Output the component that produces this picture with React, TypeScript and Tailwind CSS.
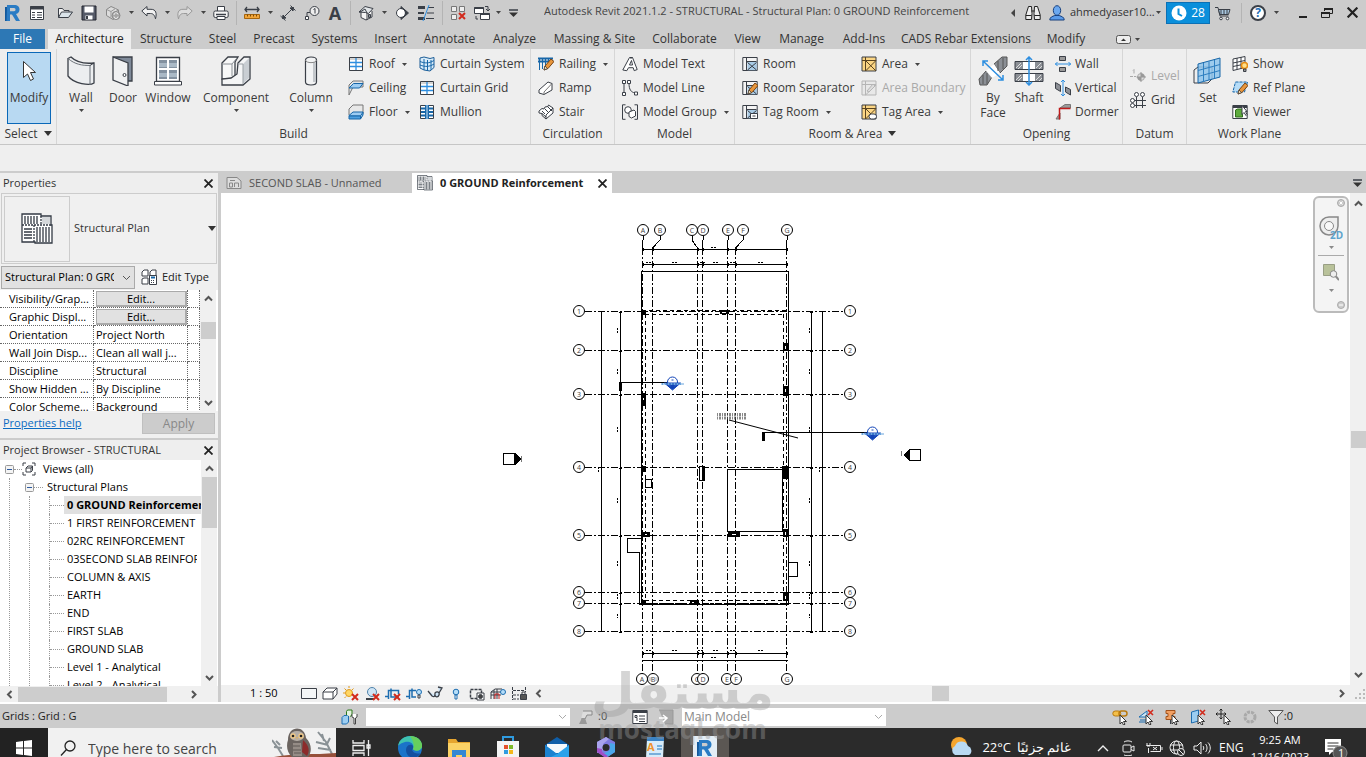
import type { ReactNode } from 'react';

interface GlyphProps {
  w?: number;
  h?: number;
  children: ReactNode;
}

function Glyph({ w = 16, h = 16, children }: GlyphProps) {
  return (
    <svg className="shrink-0" width={w} height={h} viewBox={`0 0 ${w} ${h}`} fill="none" stroke="#3a3f47" aria-hidden="true">
      {children}
    </svg>
  );
}

function Caret({ big = false }: { big?: boolean }) {
  return big ? (
    <Glyph w={8} h={5}><path d="M0 0h8L4 5z" fill="#333" stroke="none" /></Glyph>
  ) : (
    <Glyph w={5} h={3}><path d="M0 0h5L2.500 3z" fill="#444" stroke="none" /></Glyph>
  );
}

function Chevron({ dir, color = '#555', thin }: { dir: 'up' | 'down' | 'left' | 'right'; color?: string; thin?: boolean }) {
  const paths = {
    up: 'M1 6.500L4.500 3l3.500 3.500',
    down: 'M1 3l3.500 3.500L8 3',
    left: 'M6.500 1L3 4.500 6.500 8',
    right: 'M3 1l3.500 3.500L3 8',
  };
  return <Glyph w={9} h={9}><path d={paths[dir]} stroke={color} strokeWidth={thin ? 1 : 2} /></Glyph>;
}

function CloseX({ size = 9 }: { size?: number }) {
  return (
    <svg width={size} height={size} viewBox="0 0 9 9" stroke="#222" strokeWidth="1.8" aria-hidden="true">
      <path d="M.5.5l8 8M8.500.5l-8 8" />
    </svg>
  );
}

const cursor = <path d="M8 6v9l2-2 1.500 3 1.500-.8-1.500-2.700h3z" fill="#fff" stroke="#333" />;
const redX = <path d="M9 8l6 6M15 8l-6 6" stroke="#d22a1c" strokeWidth="2" />;
const pencil = (
  <g>
    <path d="M6 14l1-4 6-7 3 2.500-6 7z" fill="#e8963c" stroke="#7a4412" />
    <path d="M6 14l1-4 2.500 2.500z" fill="#fbe3bd" stroke="#333" strokeWidth=".7" />
  </g>
);

/* ---------- quick access icons ---------- */

const qat: Record<string, ReactNode> = {
  home: (
    <Glyph w={18} h={18}>
      <path d="M1 3h4v14H1z" fill="#12589b" stroke="none" />
      <path d="M3 1h7c4 0 5.500 2 5.500 4.500S14 9.500 12 10l4 7h-4l-4-6.500H6V17H2.500z" fill="#2b7cc4" stroke="none" />
      <path d="M6 4h4c2 0 2 3.200 0 3.200H6z" fill="#ccc" stroke="none" />
    </Glyph>
  ),
  props: (
    <Glyph>
      <path d="M1.500 1.500h13v13h-13z" fill="#fff" />
      <path d="M1 3h14" strokeWidth="3" />
      <path d="M3 7.500h3M3 10h3M3 12.500h3M8 7.500h5M8 10h5M8 12.500h5" />
    </Glyph>
  ),
  open: (
    <Glyph>
      <path d="M1.500 12.500v-9h4l1.500 2h5v2" fill="#f4f4f4" />
      <path d="M1.500 12.500l3-5.500h11l-4 5.500z" fill="#dbe4ea" />
    </Glyph>
  ),
  save: (
    <Glyph>
      <path d="M1 1h14v14H1z" fill="#555a68" stroke="#22252e" />
      <path d="M3.500 1.500h9v6h-9zM4.500 10.500h7v4h-7z" fill="#fff" stroke="none" />
      <path d="M6 11v3" strokeWidth="2" />
    </Glyph>
  ),
  sync: (
    <Glyph>
      <path d="M1.500 4.500L6 1.500l4.500 2 3 1.500v6L8 14.500l-6.500-4z" fill="#dcdcdc" stroke="#888" />
      <path d="M1.500 4.500l4.500 2 4.500-3M6 6.500v6M8 8l5.500-3" stroke="#999" />
      <circle cx="11" cy="10.500" r="4" fill="#a5a5a5" stroke="#8a8a8a" />
      <path d="M9 10a2 2 0 014-.5M13 11.500a2 2 0 01-4 0" stroke="#eee" />
    </Glyph>
  ),
  undo: <Glyph><path d="M.8 6L6 1.500v2.800h4c5 0 6 4 4.500 9.500-1-4-2.500-5.300-5-5.300H6V11z" fill="#f2f2f2" /></Glyph>,
  redo: <Glyph><path d="M15.200 6L10 1.500v2.800H6c-5 0-6 4-4.500 9.500 1-4 2.500-5.300 5-5.300H10V11z" fill="#ddd" stroke="#999" /></Glyph>,
  print: (
    <Glyph>
      <path d="M4.500 6V1.500h7V6" fill="#fff" />
      <rect x=".8" y="6" width="14.400" height="6.500" rx="1.500" fill="#f4f4f4" />
      <path d="M3 9.500h10" strokeWidth="1.500" />
      <path d="M4 11.500h8v3H4z" fill="#fff" />
    </Glyph>
  ),
  measure: (
    <Glyph>
      <path d="M1 4.500h14M3 2L1 4.500 3 7M13 2l2 2.500L13 7" strokeWidth="1.300" />
      <path d="M.5 9.500h15v4H.5z" fill="#f2a63a" stroke="#a5650e" />
      <path d="M3.500 9.500v2M6.500 9.500v2M9.500 9.500v2M12.500 9.500v2" stroke="#7c4a06" />
    </Glyph>
  ),
  dim: <Glyph><path d="M2.500 13.500l11-11M.5 11l5 4.500M10.500.5l5 5" /><path d="M2.500 13.500l.5-3.500 3 3zM13.500 2.500L10 3l3 3z" fill="#3a3f47" /></Glyph>,
  tag: (
    <Glyph>
      <circle cx="10.500" cy="6" r="4.500" fill="#eee" />
      <path d="M9.500 4.500l1.500-1v5M6 7.500H3v5" />
      <path d="M1.500 11.500h3v3h-3z" fill="#fff" />
    </Glyph>
  ),
  text: <span className="text-[18px] leading-none font-bold text-[#3a3f47]">A</span>,
  view3d: (
    <Glyph>
      <path d="M3 6.500v6l5 2.500 6-3V6" fill="#f4f4f4" />
      <path d="M1 7l6-5.500 8 2-4.500 5-3-1z" fill="#e2e6e9" />
      <path d="M1 7l2-.5 4-2.500 2 4v7" />
      <path d="M10.500 9.500h2v3h-2z" fill="#8b9299" />
    </Glyph>
  ),
  section: <Glyph><circle cx="7" cy="8" r="4.500" fill="#fff" /><path d="M7 1.500L14.500 8 7 14.500v-2a4.500 4.500 0 000-9z" fill="#3a3f47" /></Glyph>,
  thin: (
    <Glyph>
      <path d="M0 2.500h7M0 13.500h7" strokeWidth="3" />
      <path d="M0 8h6" strokeWidth="2" />
      <path d="M10 2.500h6M9 8h7M8 13.500h8" />
      <path d="M11 0L5 16" stroke="#2d8ee0" />
    </Glyph>
  ),
  hidden: (
    <Glyph>
      <path d="M1.500 1.500h5v5h-5zM9.500 1.500h5v5h-5zM1.500 9.500h5v5h-5z" fill="#eee" stroke="#777" />
      {redX}
    </Glyph>
  ),
  switch: (
    <Glyph>
      <path d="M.5 2.500h9v6h-9zM6.500 8.500h9v6h-9z" fill="#fff" />
      <path d="M.5 3h9M6.500 9h9" strokeWidth="2" />
      <path d="M11 1.500h3v4M12 4l2 2 2-2M2 11v3h2" />
    </Glyph>
  ),
  more: <Glyph w={9} h={8}><path d="M0 1h9" strokeWidth="1.500" /><path d="M0 3.500h9L4.500 8z" fill="#333" stroke="none" /></Glyph>,
};

const quickAccess: { id: string; label: string; cell: string }[] = [
  { id: 'home', label: 'Revit menu', cell: 'w-[25px]' },
  { id: 'props', label: 'Home', cell: 'w-[23px] mr-[5px]' },
  { id: 'open', label: 'Open', cell: 'w-6' },
  { id: 'save', label: 'Save', cell: 'w-6' },
  { id: 'sync', label: 'Synchronize', cell: 'w-6' },
  { id: 'caret', label: 'Synchronize options', cell: 'w-3' },
  { id: 'undo', label: 'Undo', cell: 'w-6' },
  { id: 'caret', label: 'Undo list', cell: 'w-3' },
  { id: 'redo', label: 'Redo', cell: 'w-6' },
  { id: 'caret', label: 'Redo list', cell: 'w-3' },
  { id: 'print', label: 'Print', cell: 'w-6' },
  { id: 'sep', label: '', cell: 'w-[7px]' },
  { id: 'measure', label: 'Measure', cell: 'w-6' },
  { id: 'caret', label: 'Measure options', cell: 'w-3' },
  { id: 'dim', label: 'Aligned dimension', cell: 'w-6' },
  { id: 'tag', label: 'Tag by category', cell: 'w-6' },
  { id: 'text', label: 'Text', cell: 'w-[22px]' },
  { id: 'sep', label: '', cell: 'w-2' },
  { id: 'view3d', label: 'Default 3D view', cell: 'w-6' },
  { id: 'caret', label: '3D view options', cell: 'w-3' },
  { id: 'section', label: 'Section', cell: 'w-6' },
  { id: 'thin', label: 'Thin lines', cell: 'w-6' },
  { id: 'sep', label: '', cell: 'w-2' },
  { id: 'hidden', label: 'Close inactive views', cell: 'w-6' },
  { id: 'switch', label: 'Switch windows', cell: 'w-6' },
  { id: 'caret', label: 'Window list', cell: 'w-2' },
  { id: 'more', label: 'Customize toolbar', cell: 'w-[22px]' },
];

function TitleBar() {
  return (
    <div className="flex h-[25px] shrink-0 items-center">
      {quickAccess.map((item, i) =>
        item.id === 'sep' ? (
          <span key={i} className={`${item.cell} flex h-6 shrink-0 justify-center`}>
            <span className="w-px bg-[#b4b4b4]" />
          </span>
        ) : (
          <button key={i} aria-label={item.label} className={`${item.cell} flex h-6 shrink-0 items-center justify-center`}>
            {item.id === 'caret' ? <Caret /> : qat[item.id]}
          </button>
        )
      )}
      <h1 className="ml-5 flex-1 truncate pb-1 text-[11px] leading-4 text-[#444]">
        Autodesk Revit 2021.1.2 - STRUCTURAL - Structural Plan: 0 GROUND Reinforcement
      </h1>
      <button aria-label="Collapse search" className="flex w-4 justify-center">
        <Glyph w={4} h={8}><path d="M4 0v8L0 4z" fill="#444" stroke="none" /></Glyph>
      </button>
      <button aria-label="Search" className="flex w-6 justify-center">
        <Glyph>
          <path d="M3.500 1.500h3l.5 7-.5 6H.8V10zM12.500 1.500h-3l-.5 7 .5 6h5.700V10z" fill="#eee" stroke="#222" />
          <path d="M6.500 6h3M1 10.500h5.500M9.500 10.500H15" stroke="#222" />
        </Glyph>
      </button>
      <button aria-label="Account" className="flex w-6 justify-center">
        <Glyph>
          <path d="M.8 15c0-3 2.500-3.500 5-4.500h4.400c2.500 1 5 1.500 5 4.500z" fill="#5b9bea" stroke="#173f7c" />
          <ellipse cx="8" cy="5.500" rx="3.700" ry="4.800" fill="#6ba8f0" stroke="#173f7c" />
        </Glyph>
      </button>
      <button className="flex h-6 w-[97px] items-center gap-px pl-px text-[11px] text-[#333]">
        ahmedyaser10...<Caret />
      </button>
      <button className="flex h-[22px] w-11 items-center justify-center gap-1 border border-[#0b70b5] bg-[#0a8fdb] text-[12px] text-white">
        <Glyph>
          <circle cx="8" cy="8" r="7.500" fill="#fff" stroke="none" />
          <path d="M7.500 3.500V9l3.500 2" stroke="#0a8fdb" strokeWidth="2" />
        </Glyph>
        28
      </button>
      <button aria-label="App store" className="flex w-[26px] justify-center">
        <Glyph>
          <path d="M0 2.500h3l2 8.500h8.500" />
          <path d="M3.500 4.500H15l-1.500 5H4.800z" fill="#a9c8e0" />
          <path d="M6 5v4M9 5v4M12 5v4" />
          <circle cx="6" cy="13.500" r="1.300" fill="#fff" /><circle cx="12.500" cy="13.500" r="1.300" fill="#fff" />
        </Glyph>
      </button>
      <span className="ml-[5px] h-5 w-px bg-[#b4b4b4]" />
      <button aria-label="Help" className="flex w-8 items-center justify-center">
        <span className="flex size-4 items-center justify-center rounded-full border-2 border-[#3a3f47] bg-white text-[12px] font-bold text-[#1f6fb8]">?</span>
      </button>
      <button aria-label="Help menu" className="flex w-1 justify-center"><Caret /></button>
      <button aria-label="Minimize" className="ml-[13px] flex w-6 justify-center"><Glyph w={8} h={10}><path d="M0 9h8" stroke="#222" strokeWidth="2" /></Glyph></button>
      <button aria-label="Restore" className="flex w-6 justify-center">
        <Glyph w={12} h={12}>
          <path d="M3.500 4V1.500h8v5H9M.5 5.500h8v5h-8z" stroke="#222" />
          <path d="M3 2h9M0 6h9" stroke="#222" strokeWidth="2" />
        </Glyph>
      </button>
      <button aria-label="Close" className="flex w-[27px] justify-center"><CloseX size={11} /></button>
    </div>
  );
}

/* ---------- ribbon ---------- */

const ribbonTabs: [string, string][] = [
  ['Structure', 'w-[68px]'], ['Steel', 'w-[45px]'], ['Precast', 'w-[58px]'], ['Systems', 'w-[63px]'],
  ['Insert', 'w-[49px]'], ['Annotate', 'w-[69px]'], ['Analyze', 'w-[61px]'], ['Massing & Site', 'w-[99px]'],
  ['Collaborate', 'w-[81px]'], ['View', 'w-[45px]'], ['Manage', 'w-[63px]'], ['Add-Ins', 'w-[62px]'],
  ['CADS Rebar Extensions', 'w-[142px]'], ['Modify', 'w-[58px]'],
];

function RibbonTabs() {
  return (
    <nav className="flex h-6 shrink-0 items-stretch pt-1 text-[12px] whitespace-nowrap text-[#333]">
      <button className="w-[45px] bg-[#2d78b5] text-white">File</button>
      <button className="ml-[3px] w-[83px] bg-[#eee] text-[#222]">Architecture</button>
      <span className="w-px" />
      {ribbonTabs.map(([label, width]) => (
        <button key={label} className={`${width} flex shrink-0 items-center justify-center`}>{label}</button>
      ))}
      <button aria-label="Minimize ribbon" className="ml-[21px] flex items-center gap-1">
        <Glyph w={15} h={9}>
          <rect x=".5" y=".5" width="14" height="8" rx="2" fill="#eee" stroke="#555" />
          <path d="M5 6h5L7.500 3.500z" fill="#333" stroke="none" />
        </Glyph>
        <Caret />
      </button>
    </nav>
  );
}

const gridPanel = (
  <>
    <path d="M1.500 1.500h13v13h-13z" fill="#fff" />
    <path d="M2 3h12" stroke="#d5d5d5" strokeWidth="2" />
    <path d="M8 2v12M2 6.500h12M2 10.500h12" stroke="#2d8ee0" strokeWidth="1.300" />
  </>
);
const roomBase = (
  <>
    <path d="M.8 1.500h14.400v13H.8z" fill="#f4f4f4" />
    <path d="M4.500 1.500v13M4.500 5.500h10" />
    <path d="M5.500 6h9.200v8.200H5.500z" fill="#a9cbe6" stroke="none" />
    <path d="M5.500 6.500l9 7.500M14.500 6.500l-9 7.500" />
  </>
);
const areaBase = (
  <>
    <path d="M1 1h14v14H1z" fill="#fbd583" />
    <path d="M1 4.500h14M4.500 1v14M4.500 4.500L15 15M15 4.500L4.500 15" stroke="#5a4420" />
  </>
);
const tagBox = <path d="M8.500 9.500h7v5h-7zM10.500 12h3" fill="#fff" />;

const small: Record<string, ReactNode> = {
  Roof: <Glyph>{gridPanel}</Glyph>,
  Ceiling: (
    <Glyph>
      <path d="M1 15V5l4-4h10v6H5l-4 8z" fill="#e4e6e8" stroke="#777" />
      <path d="M1 8l4.500-4.500H15L11.500 8z" fill="#9ecdf3" stroke="#1766a8" />
    </Glyph>
  ),
  Floor: (
    <Glyph>
      <path d="M1 11V5l4-4h10v9" fill="#e8e8e8" stroke="#777" />
      <path d="M1 11.500L5 8h10l-2.500 4H1z" fill="#9ecdf3" stroke="#1766a8" />
      <path d="M1 12h11.500v3H1zM12.500 15L15 11V8" fill="#4ea0e0" stroke="#1766a8" />
    </Glyph>
  ),
  'Curtain System': (
    <Glyph>
      <path d="M1 2l4-1 6 1.500 4-1v10l-4 3.500-6-1-4-2z" fill="#d8ecfa" stroke="#1d5d97" />
      <path d="M1 5.500c5 2 9 2 14-1M1 9c5 2 9 2 14-1M5 3v11M8.500 4v11M12 4v10" stroke="#1766a8" />
    </Glyph>
  ),
  'Curtain Grid': <Glyph>{gridPanel}</Glyph>,
  Mullion: (
    <Glyph>
      <path d="M1.500 1.500h13v13h-13z" fill="#fff" />
      <path d="M8 1v14" stroke="#1766a8" strokeWidth="4" /><path d="M8 1v14" stroke="#cfe6f8" />
      <path d="M2 4.500h4M10 4.500h4M2 8h4M10 8h4M2 11.500h4M10 11.500h4" stroke="#1766a8" strokeWidth="2" />
    </Glyph>
  ),
  Railing: (
    <Glyph>
      <path d="M0 2.500h15M0 5.500h15" stroke="#1766a8" strokeWidth="2" />
      <path d="M1.500 3v11M4.500 3v10M7.500 3v10M10.500 3v6M13.500 3v4" stroke="#1766a8" />
      {pencil}
    </Glyph>
  ),
  Ramp: <Glyph><path d="M1 10L10 2l4 1.500V10l-8 4.500-5-1.500z" fill="#fff" /><path d="M14 3.500L6 12v2.500" stroke="#777" /></Glyph>,
  Stair: (
    <Glyph>
      <path d="M1 7l3-2.500 2 .5 1-2 3-.5.500-1.500L15 4v5l-7 6-4-3.500v-2L1 9z" fill="#fff" />
      <path d="M4 7l3 3M7 5l4 4M10 3l4 4M4 9.500L8 13M8 15v-4l7-7" />
    </Glyph>
  ),
  'Model Text': <Glyph><path d="M.8 14L7.500 1.500h3l4.700 12-3 1.200-1-3H6.500l-1.700 3z" fill="#fff" /><path d="M7.500 9l2-4.500 1 4.500zM10.500 1.500l-2 1" /></Glyph>,
  'Model Line': (
    <Glyph>
      <path d="M2 3v10M7 3c0 7 2 9 6 10" />
      <path d="M.5.5h3v3h-3zM.5 12.500h3v3h-3zM5.500.5h3v3h-3zM12.500 12h3v3h-3z" fill="#fff" />
    </Glyph>
  ),
  'Model Group': (
    <Glyph>
      <path d="M3.500.8h-3v14.500h3M12.500.8h3v14.500h-3" />
      <circle cx="6" cy="6" r="3.300" fill="#fff" />
      <path d="M7 8l5-2 1.500 1.500V12l-4 2L7 12.500z" fill="#fff" />
    </Glyph>
  ),
  Room: <Glyph>{roomBase}</Glyph>,
  'Room Separator': <Glyph>{roomBase}{pencil}</Glyph>,
  'Tag Room': <Glyph>{roomBase}{tagBox}</Glyph>,
  Area: <Glyph>{areaBase}</Glyph>,
  'Area Boundary': (
    <Glyph>
      <path d="M1 1h14v14H1zM1 4.500h14M4.500 1v14M4.500 15L15 5" stroke="#b5b5b5" fill="#e8e8e8" />
      <path d="M6 11l6-7 2 2-6 6z" fill="#ddd" stroke="#b5b5b5" />
    </Glyph>
  ),
  'Tag Area': <Glyph>{areaBase}<rect x="8" y="10" width="7.500" height="5" rx="2.500" fill="#fff" /></Glyph>,
  Wall: (
    <Glyph>
      <path d="M4.500.5h6v4h-6zM4.500 11.500h6v4h-6z" fill="#999" />
      <path d="M0 8h16M2.500 6L.5 8l2 2M13.500 6l2 2-2 2" stroke="#2d8ee0" />
    </Glyph>
  ),
  Vertical: (
    <Glyph>
      <path d="M.5 2.500l5 3v6l-5-3zM10.500 7l5 2.500V15l-5-3z" fill="#8d9096" />
      <path d="M8 0v16M6 2l2-2 2 2M6 14l2 2 2-2" stroke="#2d8ee0" />
    </Glyph>
  ),
  Dormer: (
    <Glyph>
      <path d="M1 15L5 9v6zM5 4l5-3.500h5.500V4z" fill="#9a9a9a" stroke="#777" />
      <path d="M4.500 15.500V4.500h11" stroke="#c01a1a" strokeWidth="1.500" />
    </Glyph>
  ),
  Level: (
    <Glyph>
      <path d="M0 8.500h6" strokeDasharray="3 1" stroke="#aaa" /><path d="M3 2.500l1-1v4" stroke="#aaa" />
      <circle cx="11" cy="9" r="3.500" fill="#ddd" stroke="#aaa" />
      <path d="M11 9V5.500A3.500 3.500 0 0114.500 9zM11 9v3.500A3.500 3.500 0 017.500 9z" fill="#999" stroke="none" />
      <path d="M11 4v10M6.500 9H16" stroke="#999" />
    </Glyph>
  ),
  Grid: (
    <Glyph>
      <path d="M6.500 5v11M12.500 5v11M4 8.500h12M4 13.500h12" />
      <circle cx="6.500" cy="2.500" r="2" fill="#fff" /><circle cx="12.500" cy="2.500" r="2" fill="#fff" />
      <circle cx="2.500" cy="8.500" r="2" fill="#fff" /><circle cx="2.500" cy="13.500" r="2" fill="#fff" />
    </Glyph>
  ),
  Show: (
    <Glyph>
      <path d="M1 3l12-2.500v11L1 14.500zM1 7l12-2.500M1 10.500l12-2.500M5 2v11.500M9 1v12" fill="#fff" />
      <circle cx="12.500" cy="9.500" r="3" fill="#ffe08a" stroke="#e58a12" strokeWidth="1.500" />
      <path d="M11.500 13h2.500v2.500h-2.500z" fill="#999" />
    </Glyph>
  ),
  'Ref Plane': <Glyph><path d="M3.500 2h12l-3 10H.8z" fill="#b5dcf8" stroke="#1766a8" strokeDasharray="3 1" />{pencil}</Glyph>,
  Viewer: (
    <Glyph>
      <path d="M.8 1.500h14.400v13H.8z" fill="#fff" /><path d="M1 3h14" strokeWidth="2" />
      <path d="M3.500 6l2-1h5v8H3.500z" fill="#5dab3d" stroke="#2f6d1b" /><path d="M10 1.500v9l2-2 2 3 1-1-1.500-3H15z" fill="#fff" />
    </Glyph>
  ),
};

const hatch = '#8b8f95';
const large: Record<string, ReactNode> = {
  Modify: <Glyph w={30} h={30}><path d="M9.500 5.500v16l4-3.500 3 6.500 3-1.500-3-6.500h5z" fill="#fff" stroke="#333" /></Glyph>,
  Wall: (
    <Glyph w={30} h={30}>
      <path d="M2 2.500l3-1.500c6 6 13 7 23 6v20c-4 3-20 1-26-7z" fill="#eceef0" strokeWidth="1.300" />
      <path d="M2 2.500c7 6 14 7 22 7v19.500" stroke="#6d737a" /><path d="M24 9.500l4-2.500" />
    </Glyph>
  ),
  Door: (
    <Glyph w={30} h={30}>
      <path d="M5 1h19v24H10" fill="#7f8a99" strokeWidth="1.300" />
      <path d="M5 1l15 6v23L5 24z" fill="#f0f1f2" strokeWidth="1.300" /><circle cx="16.500" cy="19" r="1.500" fill="#fff" />
    </Glyph>
  ),
  Window: (
    <Glyph w={30} h={30}>
      <path d="M3.500 1.500h23v24h-23z" fill="#fff" strokeWidth="1.300" />
      <path d="M6 4h8v8H6zM16 4h8v8h-8zM6 14h8v9H6zM16 14h8v9h-8z" fill="#8391a0" stroke="none" />
      <path d="M6 9h8M16 9h8M6 19h8M16 19h8" stroke="#aab9c6" strokeWidth="4" />
      <path d="M1.500 25.500h27v3.500h-27z" fill="#fff" />
    </Glyph>
  ),
  Component: (
    <Glyph w={30} h={30}>
      <path d="M1 7l6-6h10l-3 5v14l-4 3H1z" fill="#f7f8f8" strokeWidth="1.300" />
      <path d="M1 8h10l5-6M11 8v12" stroke="#8a8f95" />
      <path d="M17 7l6-6h6v22l-7 6H1v-6l9-1 6-4z" fill="#f4f5f6" strokeWidth="1.300" />
      <path d="M22 8l6-6v20l-6 6z" fill="#c9ced3" stroke="none" />
      <path d="M17 8h5v20" stroke="#9a9fa5" />
    </Glyph>
  ),
  Column: (
    <Glyph w={30} h={30}>
      <path d="M9.500 4c0-4 11-4 11 0v22c0 4-11 4-11 0z" fill="#f2f3f4" strokeWidth="1.200" />
      <path d="M17 6h3v20h-3z" fill="#c3c7cb" stroke="none" /><path d="M9.500 4c0 3.500 11 3.500 11 0" stroke="#888" />
    </Glyph>
  ),
  'By Face': (
    <Glyph w={30} h={30}>
      <path d="M16 8l8-7h5v9l-7 7zM1 23l7-8 6 6-5 8H2z" fill={hatch} stroke="#555" />
      <path d="M8 15l8-7 6 9-8 5z" fill="#fff" stroke="none" />
      <path d="M20 5v10M25 2v11M5 19v9M9 17v11" stroke="#555" />
      <path d="M5 5l20 19M5 10V5h5M25 19v5h-5" stroke="#2d8ee0" strokeWidth="1.500" />
    </Glyph>
  ),
  Shaft: (
    <Glyph w={30} h={30}>
      <path d="M1 5.500h28v8H1zM1 17.500h28v8H1z" fill={hatch} />
      <path d="M9 6h12v7H9zM9 18h12v7H9z" fill="#fff" stroke="none" />
      <path d="M2 12l5-5M4 13l4-4M22 12l5-5M25 13l3-3M2 24l5-5M4 25l4-4M22 24l5-5M25 25l3-3" stroke="#ddd" />
      <path d="M15 1v28M12 4l3-3 3 3M12 26l3 3 3-3" stroke="#2d8ee0" strokeWidth="1.500" />
    </Glyph>
  ),
  Set: (
    <Glyph w={30} h={30}>
      <path d="M1 14l4-3h14v12l-4 4H1z" fill="#eee" />
      <path d="M5 8l22-6v19L5 27z" fill="#8ec4ec" fillOpacity=".85" stroke="#1766a8" />
      <path d="M10.500 7v19M16 5.500v18.500M21.500 4v18.500M5 14.500l22-6M5 20.500l22-6" stroke="#2f7fc0" />
    </Glyph>
  ),
};

function SmallButton({ label, menu, disabled, tight }: { label: string; menu?: boolean; disabled?: boolean; tight?: boolean }) {
  return (
    <button disabled={disabled} className={`flex h-6 items-center whitespace-nowrap ${tight ? 'gap-1' : 'gap-[5px]'} ${disabled ? 'text-[#a9a9a9]' : ''}`}>
      {small[label]}
      <span>{label}</span>
      {menu && <span className="pl-0.5"><Caret /></span>}
    </button>
  );
}

function LargeButton({ label, cell, menu }: { label: string; cell: string; menu?: boolean }) {
  return (
    <button className={`${cell} flex shrink-0 flex-col items-center pt-1`}>
      {large[label]}
      <span className="mt-1 leading-[15px]">{label}</span>
      {menu && <span className="mt-1"><Caret /></span>}
    </button>
  );
}

function RibbonGroup({ title, width, menu, children }: { title: string; width: string; menu?: boolean; children: ReactNode }) {
  return (
    <section className={`${width} flex shrink-0 flex-col border-r border-[#d6d6d6]`}>
      <div className="flex h-[75px] items-start pt-[3px]">{children}</div>
      <h2 className="flex h-[19px] items-center justify-center gap-1.5 text-[12px]">
        {title}
        {menu && <Caret big />}
      </h2>
    </section>
  );
}

function Ribbon() {
  return (
    <div className="flex h-24 shrink-0 overflow-hidden border-b border-[#c6c6c6] bg-[#eee] text-[12px] text-[#3a3a3a]">
      <RibbonGroup title="Select" width="w-[57px]" menu>
        <button className="ml-[7px] flex h-[72px] w-11 flex-col items-center border border-[#0a68b8] bg-[#b8d9f2] pt-[3px]">
          {large.Modify}
          <span className="mt-1 leading-[15px]">Modify</span>
        </button>
      </RibbonGroup>
      <RibbonGroup title="Build" width="w-[474px]">
        <LargeButton label="Wall" cell="ml-1.5 w-9" menu />
        <LargeButton label="Door" cell="ml-1.5 w-9" />
        <LargeButton label="Window" cell="ml-[3px] w-12" />
        <LargeButton label="Component" cell="ml-[11px] w-[66px]" menu />
        <LargeButton label="Column" cell="ml-5 w-11" menu />
        <div className="ml-[15px] w-[71px]">
          <SmallButton label="Roof" menu />
          <SmallButton label="Ceiling" />
          <SmallButton label="Floor" menu />
        </div>
        <div>
          <SmallButton label="Curtain System" />
          <SmallButton label="Curtain Grid" />
          <SmallButton label="Mullion" />
        </div>
      </RibbonGroup>
      <RibbonGroup title="Circulation" width="w-[84px]">
        <div className="pl-[7px]">
          <SmallButton label="Railing" menu />
          <SmallButton label="Ramp" />
          <SmallButton label="Stair" />
        </div>
      </RibbonGroup>
      <RibbonGroup title="Model" width="w-[120px]">
        <div className="pl-[7px]">
          <SmallButton label="Model Text" />
          <SmallButton label="Model Line" />
          <SmallButton label="Model Group" menu />
        </div>
      </RibbonGroup>
      <RibbonGroup title="Room & Area" width="w-[236px]" menu>
        <div className="w-[126px] pl-[7px]">
          <SmallButton label="Room" />
          <SmallButton label="Room Separator" />
          <SmallButton label="Tag Room" menu />
        </div>
        <div>
          <SmallButton label="Area" menu />
          <SmallButton label="Area Boundary" disabled />
          <SmallButton label="Tag Area" menu />
        </div>
      </RibbonGroup>
      <RibbonGroup title="Opening" width="w-[152px]">
        <LargeButton label="By Face" cell="ml-1 w-9" />
        <LargeButton label="Shaft" cell="w-9" />
        <div className="pl-2">
          <SmallButton label="Wall" tight />
          <SmallButton label="Vertical" tight />
          <SmallButton label="Dormer" tight />
        </div>
      </RibbonGroup>
      <RibbonGroup title="Datum" width="w-16">
        <div className="pt-3 pl-[7px]">
          <SmallButton label="Level" disabled />
          <SmallButton label="Grid" />
        </div>
      </RibbonGroup>
      <section className="flex w-[125px] flex-col">
        <div className="flex h-[75px] items-start pt-[3px]">
          <LargeButton label="Set" cell="ml-[3px] w-9" />
          <div className="pl-1.5">
            <SmallButton label="Show" />
            <SmallButton label="Ref Plane" />
            <SmallButton label="Viewer" />
          </div>
        </div>
        <h2 className="flex h-[19px] items-center justify-center">Work Plane</h2>
      </section>
    </div>
  );
}

/* ---------- left dock ---------- */

function PanelHeader({ title }: { title: string }) {
  return (
    <div className="flex h-5 shrink-0 items-center justify-between bg-[#eee] pr-[5px] pl-[3px] text-[11px] text-[#333]">
      <h2>{title}</h2>
      <button aria-label={`Close ${title}`}><CloseX /></button>
    </div>
  );
}

function StructuralPlanIcon({ size }: { size: number }) {
  return (
    <svg width={size} height={size} viewBox="0 0 32 32" fill="#fff" stroke="#333a44" strokeWidth="1.300" aria-hidden="true">
      <path d="M1 1h19v2h10v9h1v18H14v-1H1z" />
      <path d="M21 4h8v7h-8z" fill="#d5d8db" stroke="none" />
      <path d="M4 3v8M7 3v8M10 3v8M13 3v8M16 3v8M3 16h8M3 19h8M3 22h8M3 25h8M16 14v15M19 14v15M22 14v15M25 14v15M28 14v15" />
      <path d="M1 12h30M13 12v17M20 3v9" strokeDasharray="2 1" />
    </svg>
  );
}

const properties: { name: string; value: string; button?: boolean }[] = [
  { name: 'Visibility/Grap...', value: 'Edit...', button: true },
  { name: 'Graphic Displ...', value: 'Edit...', button: true },
  { name: 'Orientation', value: 'Project North' },
  { name: 'Wall Join Disp...', value: 'Clean all wall j...' },
  { name: 'Discipline', value: 'Structural' },
  { name: 'Show Hidden ...', value: 'By Discipline' },
  { name: 'Color Scheme...', value: 'Background' },
];

function PropertiesPanel() {
  return (
    <section className="shrink-0 bg-[#f0f0f0]">
      <PanelHeader title="Properties" />
      <div className="mr-px ml-px flex h-[71px] items-center border border-[#ccc]">
        <div className="ml-0.5 flex size-[66px] items-center justify-center border border-[#ccc]">
          <StructuralPlanIcon size={32} />
        </div>
        <span className="flex-1 pl-1 text-[11px] text-[#333]">Structural Plan</span>
        <Caret big />
      </div>
      <div className="flex h-[26px] items-center pl-px">
        <div className="relative w-[134px]">
          <select aria-label="Instance filter" className="block h-[23px] w-full appearance-none overflow-hidden border border-[#aaa] bg-[#e1e1e1] pr-5 pl-[3px] text-[11px] text-black">
            <option>Structural Plan: 0 GROUND Reinforcement</option>
          </select>
          <span className="pointer-events-none absolute inset-y-0 right-1 flex items-center"><Chevron dir="down" thin /></span>
        </div>
        <button className="flex items-center gap-[5px] pl-1.5 text-[11px] text-[#222]">
          <Glyph>
            <path d="M1 3l2-2h4v6H1zM9 3l2-2h4v6H9zM1 10l2-1h4v6H1z" fill="#fff" />
            <path d="M8.500 6.500h7v9h-7z" fill="#fff" /><path d="M10 8.500h4" stroke="#1766a8" strokeWidth="2" /><path d="M10 11.500h4M10 13.500h4" strokeDasharray="1 1" />
          </Glyph>
          Edit Type
        </button>
      </div>
      <div className="flex h-[121px] overflow-hidden bg-white">
        <table className="w-[200px] table-fixed border-separate border-spacing-0 self-start text-[11px] leading-[17px] text-black">
          <tbody>
            {properties.map((row) => (
              <tr key={row.name}>
                <th scope="row" className="h-[18px] w-[94px] truncate border-r border-b border-dotted border-[#666] p-0 pl-[9px] text-left font-normal">{row.name}</th>
                <td className="h-[18px] w-[94px] truncate border-r border-b border-dotted border-[#666] p-0 pl-0.5">
                  {row.button ? (
                    <button className="mt-px block h-4 w-[91px] border border-r-2 border-b-2 border-[#aaa] bg-[#e1e1e1] text-center leading-[13px]">{row.value}</button>
                  ) : (
                    row.value
                  )}
                </td>
                <td className="h-[18px] border-r border-b border-dotted border-[#666] p-0" />
              </tr>
            ))}
          </tbody>
        </table>
        <div className="mr-0.5 flex flex-1 flex-col items-center justify-between bg-[#f0f0f0] py-1">
          <Chevron dir="up" />
          <div className="mb-10 h-[17px] w-[15px] bg-[#cdcdcd]" />
          <Chevron dir="down" />
        </div>
      </div>
      <div className="flex h-[27px] items-center justify-between pr-[3px] pb-0.5 pl-[3px]">
        <a href="#help" className="text-[11px] text-[#0b6bc2] underline">Properties help</a>
        <button disabled className="h-[21px] w-[73px] border border-[#bfbfbf] bg-[#ccc] text-[12px] text-[#888]">Apply</button>
      </div>
    </section>
  );
}

const views = [
  '0 GROUND Reinforcement', '1 FIRST REINFORCEMENT', '02RC REINFORCEMENT', '03SECOND SLAB REINFORCEMENT', 'COLUMN & AXIS',
  'EARTH', 'END', 'FIRST SLAB', 'GROUND SLAB', 'Level 1 - Analytical', 'Level 2 - Analytical',
];

function Collapse() {
  return (
    <Glyph w={9} h={9}>
      <rect x=".5" y=".5" width="8" height="8" rx="1" fill="#f4f4f4" stroke="#999" />
      <path d="M2 4.500h5" stroke="#2c5aa0" />
    </Glyph>
  );
}

function ProjectBrowser() {
  return (
    <section className="flex min-h-0 flex-1 flex-col border-t-2 border-[#ccc]">
      <PanelHeader title="Project Browser - STRUCTURAL" />
      <div className="flex min-h-0 flex-1 bg-white">
        <ul className="w-[201px] overflow-hidden text-[11px] leading-[18px] whitespace-nowrap text-black">
          <li>
            <button className="flex h-[18px] items-center pl-[5px]">
              <Collapse />
              <span className="w-2 border-t border-dotted border-[#999]" />
              <Glyph w={14} h={14}>
                <path d="M4 1H1v3M10 1h3v3M4 13H1v-3M10 13h3v-3" />
                <path d="M4 6l2-2h4.500v4.500L9 10H4z" fill="#fff" /><path d="M4 6h5v4M9 6l1.500-2" />
              </Glyph>
              <span className="pl-[7px]">Views (all)</span>
            </button>
            <ul className="ml-[9px] border-l border-dotted border-[#999]">
              <li>
                <button className="flex h-[18px] items-center pl-[15px]">
                  <Collapse />
                  <span className="w-[9px] border-t border-dotted border-[#999]" />
                  <span className="pl-1">Structural Plans</span>
                </button>
                <ul className="ml-[19px] border-l border-dotted border-[#999] pl-[19px]">
                  {views.map((name, i) => (
                    <li key={name} className="flex items-center border-l border-dotted border-[#999]">
                      <span className="w-[14px] shrink-0 border-t border-dotted border-[#999]" />
                      <button className={i === 0 ? 'min-w-0 flex-1 overflow-hidden bg-[#e0e0e0] pl-[3px] text-left font-bold' : 'mr-1 min-w-0 flex-1 overflow-hidden pl-[3px] text-left'}>
                        {name}
                      </button>
                    </li>
                  ))}
                </ul>
              </li>
            </ul>
          </li>
        </ul>
        <div className="mr-px flex flex-1 flex-col items-center bg-[#f0f0f0] py-1">
          <Chevron dir="up" />
          <div className="mt-1 mb-auto h-[51px] w-[15px] bg-[#cdcdcd]" />
          <Chevron dir="down" />
        </div>
      </div>
      <div className="flex h-4 shrink-0 items-center bg-[#f0f0f0] pl-[5px]">
        <Chevron dir="left" />
        <div className="ml-1 h-[15px] w-[149px] bg-[#cdcdcd]" />
        <span className="ml-[22px]"><Chevron dir="right" /></span>
      </div>
    </section>
  );
}

/* ---------- drawing ---------- */

const columnGrids = [
  { id: 'A', top: 643, x: 642.5, bottom: 642 },
  { id: 'B', top: 660, x: 652.5, bottom: 653 },
  { id: 'C', top: 692, x: 697.5, bottom: 697 },
  { id: 'D', top: 703, x: 702.5, bottom: 703 },
  { id: 'E', top: 728, x: 727.5, bottom: 727 },
  { id: 'F', top: 743, x: 735.5, bottom: 736 },
  { id: 'G', top: 787, x: 786.5, bottom: 787 },
];
const rowGrids = [311.5, 350.5, 394.5, 467.5, 535.5, 592.5, 603.5, 631.5];

// x, y, width, height of the concrete columns
const concrete = [
  [642, 310, 4, 5], [720, 310, 9, 4], [783, 343, 5, 8], [783, 386, 5, 10], [642, 393, 4, 13],
  [782, 466, 7, 13], [642, 466, 4, 6], [642, 532, 8, 5], [728, 532, 12, 5],
  [783, 529, 5, 8], [783, 592, 5, 9], [642, 600, 4, 4], [690, 600, 9, 4],
];
// small light cores left inside some of the columns
const cores = [
  [785, 346, 1, 3], [785, 389, 1, 3], [643, 398, 1, 2], [645, 534, 2, 1], [732, 534, 4, 1], [785, 532, 1, 3], [785, 596, 1, 3], [692, 602, 2, 1], [722, 312, 4, 1],
];

function Bubble({ x, y, label }: { x: number; y: number; label: string | number }) {
  return (
    <g>
      <circle cx={x} cy={y} r="5.500" fill="#fff" stroke="#000" />
      <text x={x} y={y + 2.5} textAnchor="middle" fontSize="7" fill="#444" stroke="none">{label}</text>
    </g>
  );
}

function SectionHead({ x, y }: { x: number; y: number }) {
  return (
    <g stroke="#1244b8">
      <path d={`M${x - 8} ${y + 1}h16l-8 7z`} fill="#1244b8" />
      <circle cx={x} cy={y} r="5" fill="#fff" />
      <path d={`M${x - 5} ${y + 1}h10l-5 5z`} fill="#1244b8" />
      <path d={`M${x - 11} ${y + 2}h22`} stroke="#6aa5dd" strokeDasharray="2 1" strokeWidth="2" />
      <path d={`M${x - 1} ${y - 2}h2`} />
    </g>
  );
}

function FloorPlan() {
  return (
    <svg className="h-full w-full" viewBox="221 193 1129 492" preserveAspectRatio="xMidYMid meet" fill="none" stroke="#000" role="img" aria-label="Structural plan of the ground floor">
      <g shapeRendering="crispEdges">
        {/* grid lines */}
        {columnGrids.map((g) => (
          <path key={g.id} d={`M${g.top} 236v4L${g.x} 248`} />
        ))}
        {columnGrids.map((g) => (
          <path key={g.id} d={`M${g.x} 248V674`} strokeDasharray="7 2 2 2" />
        ))}
        {rowGrids.map((y) => (
          <path key={y} d={`M585 ${y}H845`} strokeDasharray="7 2 2 2" />
        ))}
        {/* dimension strings */}
        <path d="M642 249.500h146M642 264.500h146M642 653.500h146M642 660.500h146" />
        <path d="M601.500 311v320M620.500 311v320M811.500 311v320M822.500 311v320" />
        <path d="M711 247.500h6M646 262.500h5M672 262.500h6M700 262.500h5M713 262.500h5M730 262.500h5M758 262.500h6M646 650.500h5M672 650.500h6M698 650.500h5M713 650.500h5M730 650.500h5M758 650.500h6M711 657.500h6" strokeDasharray="2 1" />
        {[617.5, 809.5].map((x) => (
          <path key={x} d={`M${x} 328v6M${x} 369v6M${x} 427v6M${x} 498v6M${x} 561v6M${x} 594v6M${x} 614v4`} strokeDasharray="2 1" />
        ))}
        <path d="M598.500 467v6M819.500 467v6" strokeDasharray="2 1" />
        {rowGrids.map((y) => (
          <path key={y} d={`M619 ${y + 1}h3M810 ${y + 1}h3`} />
        ))}
        {columnGrids.map((g) => (
          <path key={g.id} d={`M${g.x + 1} 248v3M${g.x + 1} 263v3M${g.x + 1} 652v3`} />
        ))}
        {/* slab outline */}
        <path d="M641.500 538V271.500H788.500V604.500H639.500V552.500H627.500V538.500H641.500V604" />
        <path d="M788 562.500h9.500v14H788M645.500 479.500h6v8h-6z" />
        <path d="M727.500 469.500h55v62h-55z" />
        <path d="M642 310.500h145M645 314.500h139M645 600.500h139M640 603.500h148M645.500 314v286M783.500 314v286" strokeDasharray="4 3" />
        {concrete.map(([x, y, w, h]) => (
          <rect key={`${x}-${y}`} x={x} y={y} width={w} height={h} fill="#000" stroke="none" />
        ))}
        {cores.map(([x, y, w, h]) => (
          <rect key={`${x}-${y}`} x={x} y={y} width={w} height={h} fill="#fff" stroke="none" />
        ))}
        <path d="M699.500 466.500h5v14h-5z" fill="#fff" />
        <path d="M703.500 466v15" strokeWidth="3" />
        {/* sections */}
        <path d="M620 382.500h53M763 432.500h110" />
        <path d="M620.500 382v9M763.500 432v9" strokeWidth="3" />
        {/* elevation marks */}
        <path d="M503.500 453.500h11v11h-11z" /><path d="M515 453v12l6-6z" fill="#000" stroke="none" />
        <path d="M909.500 449.500h11v11h-11z" /><path d="M909 449v12l-6-6z" fill="#000" stroke="none" />
        <path d="M521.500 456v6M901.500 451v5" stroke="#777" />
      </g>
      <path d="M729 420l69 18" />
      <SectionHead x={672.5} y={382} />
      <SectionHead x={872.5} y={432} />
      <path d="M717 414.500h29M717 418h29" stroke="#555" strokeWidth="3" strokeDasharray="1 1 2 1" opacity=".7" />
      {columnGrids.map((g) => (
        <g key={g.id}>
          <Bubble x={g.top} y={230} label={g.id} />
          <Bubble x={g.bottom} y={679} label={g.id} />
        </g>
      ))}
      {rowGrids.map((y, i) => (
        <g key={y}>
          <Bubble x={579} y={y - 0.5} label={i + 1} />
          <Bubble x={850} y={y - 0.5} label={i + 1} />
        </g>
      ))}
    </svg>
  );
}

function NavigationBar() {
  return (
    <div className="absolute top-[3px] right-px flex h-[117px] w-9 flex-col items-center rounded-md border-2 border-[#bbb] bg-[#f4f4f4]">
      <button aria-label="Close navigation bar" className="mt-px mr-0.5 self-end">
        <Glyph w={8} h={8}><circle cx="4" cy="4" r="3.500" fill="#ccc" stroke="#aaa" /><path d="M2.500 2.500l3 3M5.500 2.500l-3 3" stroke="#fff" /></Glyph>
      </button>
      <button aria-label="Steering wheel" className="mt-2">
        <Glyph w={24} h={25}>
          <path d="M10 2h9v9a9 9 0 11-9-9z" fill="#eee" stroke="#888" strokeWidth="1.500" />
          <circle cx="10" cy="11" r="4.500" fill="#f8f8f8" stroke="#888" />
          <text x="11" y="24" fontSize="10" fontWeight="bold" fill="#5ea3cc" stroke="none">2D</text>
        </Glyph>
      </button>
      <span className="flex pt-1.5 opacity-60"><Caret /></span>
      <span className="mt-1.5 h-px w-[26px] shrink-0 bg-[#aaa]" />
      <button aria-label="Zoom" className="mt-2">
        <Glyph w={16} h={17}>
          <path d="M.5.5h11v11H.5z" fill="#b9c29a" stroke="#999f85" />
          <circle cx="10.500" cy="10" r="3.300" fill="#eee" stroke="#888" /><path d="M13 12.500l3 3.500" stroke="#888" strokeWidth="2" />
        </Glyph>
      </button>
      <span className="flex pt-2 opacity-60"><Caret /></span>
      <button aria-label="Navigation options" className="mt-auto mr-0.5 mb-0.5 self-end">
        <Glyph w={8} h={8}><circle cx="4" cy="4" r="3.500" fill="#ccc" stroke="#aaa" /><path d="M2 4h4" stroke="#fff" /></Glyph>
      </button>
    </div>
  );
}

const viewControls: [string, ReactNode][] = [
  ['Detail level', <path d="M.5 2.500h15v10H.5z" fill="#f4f6f7" />],
  ['Visual style', <path d="M1 6l4-4h10v6l-4 5H1zM1 6h10v7M11 6l4-4" fill="#fff" />],
  ['Sun path', <><circle cx="6" cy="7" r="3.500" fill="#ffd764" stroke="#e09a1a" /><path d="M6 0v2M0 7h2M1.500 2.500L3 4M10.500 2.500L9 4M1.500 12L3 10.500" stroke="#e09a1a" />{redX}</>],
  ['Shadows', <><circle cx="8" cy="6" r="4.500" fill="#cfe5f6" stroke="#4f83ab" /><path d="M2 13h8" strokeWidth="2" />{redX}</>],
  ['Crop view', <><path d="M0 10.500h4M3.500 13V4.500h10V8M6 2.500V11h8" stroke="#1d6db0" strokeWidth="1.500" />{redX}</>],
  ['Crop region', <><path d="M0 10.500h4M3.500 13V4.500H10M6 2.500V11h4" stroke="#1d6db0" strokeWidth="1.500" /><circle cx="13" cy="6" r="2.500" fill="#b5def9" stroke="#1d6db0" /><path d="M12 9h2v3h-2z" /></>],
  ['Temporary hide', <><path d="M1 5l4 5c3 2 3-1 3-3 2-2 5-1 4 2s-4 2-4 0M12 7l3-5-4-1" fill="#cfe5f6" strokeWidth="1.300" /></>],
  ['Reveal hidden', <><circle cx="8" cy="6" r="2.800" fill="#b5def9" stroke="#1d6db0" /><path d="M7 9h2v4H7z" fill="#fff" stroke="#1d6db0" /></>],
  ['View properties', <><path d="M1.500 3.500h11v9h-11z" strokeWidth="1.500" strokeDasharray="3 1" /><path d="M8 7h7v7H8z" fill="#fff" /><circle cx="11.500" cy="10.500" r="2" fill="#444" /></>],
  ['Analytical model', <><path d="M1 13V6l4-3h7M1 6h10M1 9h10M4 4v9M7 3v10" /><path d="M5 13V8h4v5" stroke="#c22" /><circle cx="13" cy="6" r="2.500" fill="#b5def9" stroke="#1d6db0" /></>],
  ['Constraints', <><path d="M1.500 1v13M14.500 1v5M2 4.500h12M2 9h6M2 13h6" strokeDasharray="3 1" /><path d="M9.500 8.500h6v5h-6z" fill="#555" /><path d="M11 8V6h3v2" /></>],
];

function ViewArea() {
  return (
    <main className="flex min-w-0 flex-1 flex-col">
      <div className="flex h-5 shrink-0 items-stretch pr-1 text-[11px] text-[#555]">
        <button className="flex w-[191px] items-center gap-[7px] pl-[5px]">
          <Glyph>
            <path d="M1 2.500h10l4 3.500v7.500H1z" fill="#ddd" stroke="#888" />
            <path d="M3.500 12V8h3v4zM8.500 12V8h4v4M4 5.500h5" stroke="#888" />
          </Glyph>
          SECOND SLAB - Unnamed
        </button>
        <div className="flex w-[200px] items-center bg-white pl-[5px] font-bold text-[#222]">
          <StructuralPlanIcon size={16} />
          <span className="min-w-0 flex-1 overflow-hidden pl-[7px] whitespace-nowrap">0 GROUND Reinforcement</span>
          <button aria-label="Close view" className="pr-[5px]"><CloseX /></button>
        </div>
        <button aria-label="View list" className="ml-auto">{qat.more}</button>
      </div>
      <div className="flex min-h-0 flex-1 bg-white">
        <div className="relative min-w-0 flex-1 overflow-hidden">
          <FloorPlan />
          <NavigationBar />
        </div>
        <div className="flex w-4 flex-col items-center justify-between bg-[#f0f0f0] py-1.5">
          <Chevron dir="up" />
          <div className="h-[17px] w-[15px] bg-[#cdcdcd]" />
          <Chevron dir="down" />
        </div>
      </div>
      <div className="flex h-[17px] shrink-0 items-center bg-[#f0f0f0] pl-[29px] text-[11px] text-black">
        <button className="w-[51px] text-left">1 : 50</button>
        {viewControls.map(([label, art]) => (
          <button key={label} aria-label={label} className="w-[21px]"><Glyph>{art}</Glyph></button>
        ))}
        <span className="ml-0.5"><Chevron dir="left" /></span>
        <div className="flex flex-1 justify-center"><div className="h-[15px] w-[17px] bg-[#cdcdcd]" /></div>
        <span className="mr-2"><Chevron dir="right" /></span>
        <Glyph w={12} h={12}>
          <path d="M9 2h2M9 6h2M9 10h2M5 6h2M5 10h2M1 10h2" stroke="#bbb" strokeWidth="2" />
        </Glyph>
      </div>
    </main>
  );
}

/* ---------- status bar ---------- */

const selectToggles: [string, ReactNode][] = [
  ['Select links', <><rect x=".8" y="2" width="8" height="5" rx="2.500" fill="#f4c04a" stroke="#b97a10" /><rect x="7" y="2" width="8" height="5" rx="2.500" stroke="#b97a10" strokeWidth="1.500" />{cursor}</>],
  ['Select underlay elements', <><path d="M1 8l8-6v6zM1 13h9M2 11h8" fill="#cfe5f6" stroke="#1d6db0" /><path d="M10 1l5 5M15 1l-5 5" stroke="#d22a1c" strokeWidth="1.600" />{cursor}</>],
  ['Select pinned elements', <><path d="M2 1.500h9v3H9v3h2v3H2v-3h2v-3H2z" fill="#f2a063" stroke="#a3521b" /><path d="M6.500 11v4" />{cursor}</>],
  ['Select elements by face', <><path d="M1.500 3l7-2v11l-7 2z" fill="#9ccdf1" stroke="#1d6db0" /><path d="M10 1l5 5M15 1l-5 5" stroke="#d22a1c" strokeWidth="1.600" />{cursor}</>],
  ['Drag elements on selection', <><path d="M5 0v10M0 5h10M3.500 1.500L5 0l1.500 1.500M3.500 8.500L5 10l1.500-1.500M1.500 3.500L0 5l1.500 1.500M8.500 3.500L10 5 8.500 6.500" stroke="#222" />{cursor}</>],
  ['Background processes', <circle cx="8" cy="8" r="5" stroke="#a9a9a9" strokeWidth="3" strokeDasharray="3 1" />],
];

function StatusSelect({ label, value }: { label: string; value: string }) {
  return (
    <div className="relative w-[204px]">
      <select aria-label={label} className="block h-[18px] w-full appearance-none bg-white pl-0.5 text-[12px] leading-[18px] text-[#888]">
        <option>{value}</option>
      </select>
      <span className="pointer-events-none absolute inset-y-0 right-[3px] flex items-center">
        <Chevron dir="down" color="#aaa" thin />
      </span>
    </div>
  );
}

function StatusBar() {
  return (
    <footer className="flex h-6 shrink-0 items-center bg-[#ccc] pt-px text-[11px] text-[#222]">
      <span className="w-[341px] pl-0.5">Grids : Grid : G</span>
      <button aria-label="Worksets" className="w-[25px]">
        <Glyph w={17}>
          <path d="M1 8.500l2-2h4.500V13l-2 2H1z" fill="#9ccdf1" stroke="#1d6db0" />
          <path d="M5.500 6V2.500l1-1.500H11v5l-2 1.500" fill="#e5f3e0" stroke="#2c7a1b" />
          <path d="M11 5v3l2 1v6h1.500V9l1.500-1V5" fill="#fff" stroke="#444" />
        </Glyph>
      </button>
      <StatusSelect label="Active workset" value="" />
      <span className="ml-2 flex w-[62px] items-center gap-1 text-[#444]">
        <Glyph>
          <path d="M5 2h9v4H9l-2 4H3" fill="#ddd" stroke="#888" /><path d="M1 15l3-6h3l2 6z" fill="#999" stroke="none" />
        </Glyph>
        :0
      </span>
      <button aria-label="Design options" className="mr-2.5 -ml-2">
        <Glyph><path d="M.8 1.500h14.400v13H.8z" fill="#fff" /><path d="M1 3h14" strokeWidth="2" /><path d="M3 6.500h2v2H3zM7 7h6M7 10h6M7 12.500h6M5 9v3" /></Glyph>
      </button>
      <button aria-label="Add to set" disabled className="mr-2">
        <Glyph><path d="M1 1h14v14H7" fill="#a8a8a8" stroke="#999" /><path d="M1 9h7M5 6l4 3-4 4" stroke="#fff" strokeWidth="1.500" /></Glyph>
      </button>
      <StatusSelect label="Active design option" value="Main Model" />
      <div className="ml-auto flex items-center pr-[73px]">
        {selectToggles.map(([label, art]) => (
          <button key={label} aria-label={label} className="w-[26px]"><Glyph>{art}</Glyph></button>
        ))}
        <button className="flex items-center">
          <Glyph><path d="M.8 1.500h14.400L9.500 8v7l-3-2V8z" fill="#eee" stroke="#555" /></Glyph>:0
        </button>
      </div>
    </footer>
  );
}

/* ---------- taskbar ---------- */

const pinned: [string, ReactNode][] = [
  ['Task View', <path d="M4 4v3h11V4M4 20v-3h11v3M4 9.500h11v5H4zM19.500 4v16M18 9h3v3h-3z" stroke="#eee" strokeWidth="1.300" />],
  ['Microsoft Edge', (
    <g stroke="none">
      <circle cx="12" cy="12" r="12" fill="#1b74c9" />
      <path d="M0 11C1-4 24-3 24 10c0 5-7 6-9 3 2-5-3-8-8-7-4 1-7 3-7 5z" fill="#3fc3b0" />
      <path d="M12 0c8 0 13 6 12 11-2 5-8 4-9 2 2-4 0-8-3-13z" fill="#67cf5d" />
      <path d="M8 14c0-4 3-6 6-5 2 1 1 4 0 5 2 4 6 4 9 3-5 8-15 5-15-3z" fill="#1450a0" />
    </g>
  )],
  ['File Explorer', (
    <g stroke="none">
      <path d="M1 3h8l2 3h12v16H1z" fill="#e6a52f" /><path d="M1 7h22v15H1z" fill="#fbd266" />
      <path d="M5 22v-8h14v8h-4v-3H9v3z" fill="#3487d3" />
    </g>
  )],
  ['Microsoft Store', (
    <g stroke="none">
      <path d="M7 5V1h10v4" stroke="#2f9be0" strokeWidth="2" /><path d="M1 5h22v18H1z" fill="#f4f4f4" />
      <path d="M8 9h4v4H8z" fill="#e5502a" /><path d="M13 9h4v4h-4z" fill="#7db928" /><path d="M8 14h4v4H8z" fill="#2f9be0" /><path d="M13 14h4v4h-4z" fill="#f5b81c" />
    </g>
  )],
  ['Mail', (
    <g stroke="none">
      <path d="M0 9L12 1l12 8v14H0z" fill="#0f5ea8" /><path d="M2 8h20v9H2z" fill="#f4f8fb" />
      <path d="M0 9l12 9 12-9v14H0z" fill="#2aa2ea" /><path d="M0 9l12 9L2 23H0z" fill="#1c82d0" />
    </g>
  )],
  ['Microsoft 365', (
    <g stroke="none">
      <path d="M12 1l9 5v10l-9 6-9-6V6z" fill="#7f7be0" />
      <path d="M3 6l9-5 3 2-6 5v6l-6 3z" fill="#a9a4ee" /><path d="M12 22l9-6V8l-5-1v7l-7 4z" fill="#4aa7ea" />
      <path d="M3 12v4l9 6 2-2-6-4v-3z" fill="#a04fc9" />
      <circle cx="12" cy="11.500" r="3.500" fill="#2b2b2b" />
    </g>
  )],
  ['Notepad', (
    <g stroke="none">
      <path d="M4 2h17l-1 20H3z" fill="#d7ecfa" /><path d="M4 1h17v4H4z" fill="#3b83c4" />
      <path d="M14 10h5M14 13h5M6 18h12" stroke="#5b9bd0" strokeWidth="1.500" /><text x="4" y="15" fontSize="11" fontWeight="bold" fill="#f0932b">A</text>
    </g>
  )],
];

function Owl() {
  return (
    <svg width="64" height="29" viewBox="0 0 64 29" aria-hidden="true">
      <path d="M0 12l6 8 5 8M4 13l4 4M2 19l8 1M46 4l8 10 7 14M50 6l2 7M58 10l-3 6M44 14l12 3M46 20l13 2" stroke="#8a9296" strokeWidth="2" fill="none" />
      <path d="M2 29c20-4 40-2 62-4v4z" fill="#96503a" />
      <path d="M16 12c0-15 17-15 18-2 6 6 6 14 2 19H20c-5-5-6-11-4-17z" fill="#6b6460" />
      <path d="M31 12c6 5 7 11 4 16l-5-4z" fill="#8c2b2b" />
      <ellipse cx="25" cy="8" rx="7" ry="5" fill="#b5aea7" />
      <path d="M21 15h8l1 13h-9z" fill="#958c86" />
      <path d="M21 18h7M21 22h8M22 25h7" stroke="#5f5955" />
      <circle cx="21" cy="8" r="2.700" fill="#f0c987" /><circle cx="29" cy="8" r="2.700" fill="#f0c987" />
      <circle cx="21" cy="8" r="1.300" fill="#222" /><circle cx="29" cy="8" r="1.300" fill="#222" />
      <path d="M24 9h2l-1 3z" fill="#e0b060" />
    </svg>
  );
}

function Taskbar() {
  return (
    <div className="h-[29px] shrink-0 overflow-hidden bg-[#2b2b2b] text-white">
      <div className="flex h-10 items-stretch">
        <button aria-label="Start" className="flex w-12 items-center justify-center bg-[#222]">
          <svg width="16" height="16" viewBox="0 0 16 16" fill="#fff" aria-hidden="true"><path d="M0 2l7-1v6.500H0zM8 1l8-1v7.500H8zM0 8.500h7V15l-7-1zM8 8.500h8V16l-8-1z" /></svg>
        </button>
        <label className="flex w-72 items-center bg-[#f1f1f1] pl-3 text-[#333]">
          <Glyph><circle cx="10" cy="6" r="5" stroke="#222" strokeWidth="1.300" /><path d="M6.500 9.500L1 15.500" stroke="#222" strokeWidth="1.300" /></Glyph>
          <input aria-label="Search" placeholder="Type here to search" className="ml-3 w-[135px] bg-transparent text-[14px] outline-none placeholder:text-[#444]" />
          <span className="ml-auto self-start"><Owl /></span>
        </label>
        {pinned.map(([label, art]) => (
          <button key={label} aria-label={label} className="flex w-[49px] items-center justify-center"><Glyph w={24} h={24}>{art}</Glyph></button>
        ))}
        <button aria-label="Revit" className="ml-0.5 flex w-12 items-center justify-center bg-[#5b5753]">
          <span className="flex size-6 items-center justify-center bg-[#e4eef6]">{qat.home}</span>
        </button>
        <div className="ml-auto flex items-center text-[12px]">
          <Glyph w={26} h={26}>
            <circle cx="11" cy="10" r="8" fill="#f4a52e" stroke="none" /><path d="M7 20a5 5 0 010-9 7 7 0 0113 0 5 5 0 011 9z" fill="#b9d9f2" stroke="none" />
          </Glyph>
          <span className="pl-2 text-[13px]">22°C</span>
          <span dir="rtl" lang="ar" className="w-[62px] pr-0.5 text-[13px] whitespace-nowrap">غائم جزئيًا</span>
          <button aria-label="Hidden icons" className="ml-6 w-6"><Glyph w={12} h={8}><path d="M1 7l5-5 5 5" stroke="#eee" strokeWidth="1.400" /></Glyph></button>
          <button aria-label="Meet now" className="w-6"><Glyph><rect x="2" y="5" width="8" height="7" rx="1" stroke="#eee" /><path d="M10 7.500l3-1.500v5l-3-1.500M3 2c2-1.500 6-1.500 8 0M3 15c2 1 6 1 8 0" stroke="#eee" /></Glyph></button>
          <button aria-label="Battery" className="w-6"><Glyph w={18}><path d="M5.500 5.500h10v6h-10M2 3v3h3V3M1.500 5.500h4M3.500 8v5M8 7l4 3M12 7l-4 3M17 7v3" stroke="#eee" /></Glyph></button>
          <button aria-label="Network" className="w-6">
            <Glyph><circle cx="7.500" cy="7.500" r="6.500" stroke="#eee" /><ellipse cx="7.500" cy="7.500" rx="3" ry="6.500" stroke="#eee" /><path d="M1 5h13M1 10h13" stroke="#eee" /><circle cx="12" cy="12" r="3.500" fill="#2b2b2b" stroke="#eee" /><path d="M9.500 9.500l5 5" stroke="#eee" /></Glyph>
          </button>
          <button aria-label="Volume" className="w-[26px]"><Glyph w={18}><path d="M1 6h3l4-4v12l-4-4H1zM10 6c1 1 1 3 0 4M12.500 4c2 2 2 6 0 8M15 2.500c3 3 3 8 0 11" stroke="#eee" /></Glyph></button>
          <button className="w-7 text-left">ENG</button>
          <button className="w-[66px] text-center text-[11px] leading-[17px]">9:25 AM<br />12/16/2023</button>
          <button aria-label="Notifications" className="mr-[17px] ml-3">
            <Glyph w={24} h={20}>
              <path d="M0 1h16v13H7l-3 3v-3H0z" fill="#fff" stroke="none" /><path d="M2.500 5h11M2.500 8h11M2.500 11h6" stroke="#333" />
              <circle cx="15" cy="15" r="7" fill="#555" stroke="#888" /><text x="13" y="19" fontSize="11" fill="#fff" stroke="none">1</text>
            </Glyph>
          </button>
        </div>
      </div>
    </div>
  );
}

function Watermark() {
  return (
    <div className="pointer-events-none absolute bottom-5 left-[600px] flex w-[165px] flex-col items-center text-[#999] opacity-40">
      <span lang="ar" dir="rtl" className="font-['DejaVu_Sans',sans-serif] text-[50px] leading-[58px] font-bold">مستقل</span>
      <span className="text-[26px] leading-4 font-bold">mostaql.com</span>
    </div>
  );
}

export default function App() {
  return (
    <div className="relative flex h-screen flex-col overflow-hidden bg-[#ccc] font-['Open_Sans','Noto_Sans',sans-serif]">
      <header className="shrink-0">
        <TitleBar />
        <RibbonTabs />
        <Ribbon />
        <div className="h-[26px] bg-[#efefef]" />
      </header>
      <div className="flex min-h-0 flex-1 border-b-2 border-white pt-0.5">
        <aside className="mr-[3px] flex w-[218px] shrink-0 flex-col bg-[#f0f0f0]">
          <PropertiesPanel />
          <ProjectBrowser />
        </aside>
        <ViewArea />
      </div>
      <StatusBar />
      <Taskbar />
      <Watermark />
    </div>
  );
}
